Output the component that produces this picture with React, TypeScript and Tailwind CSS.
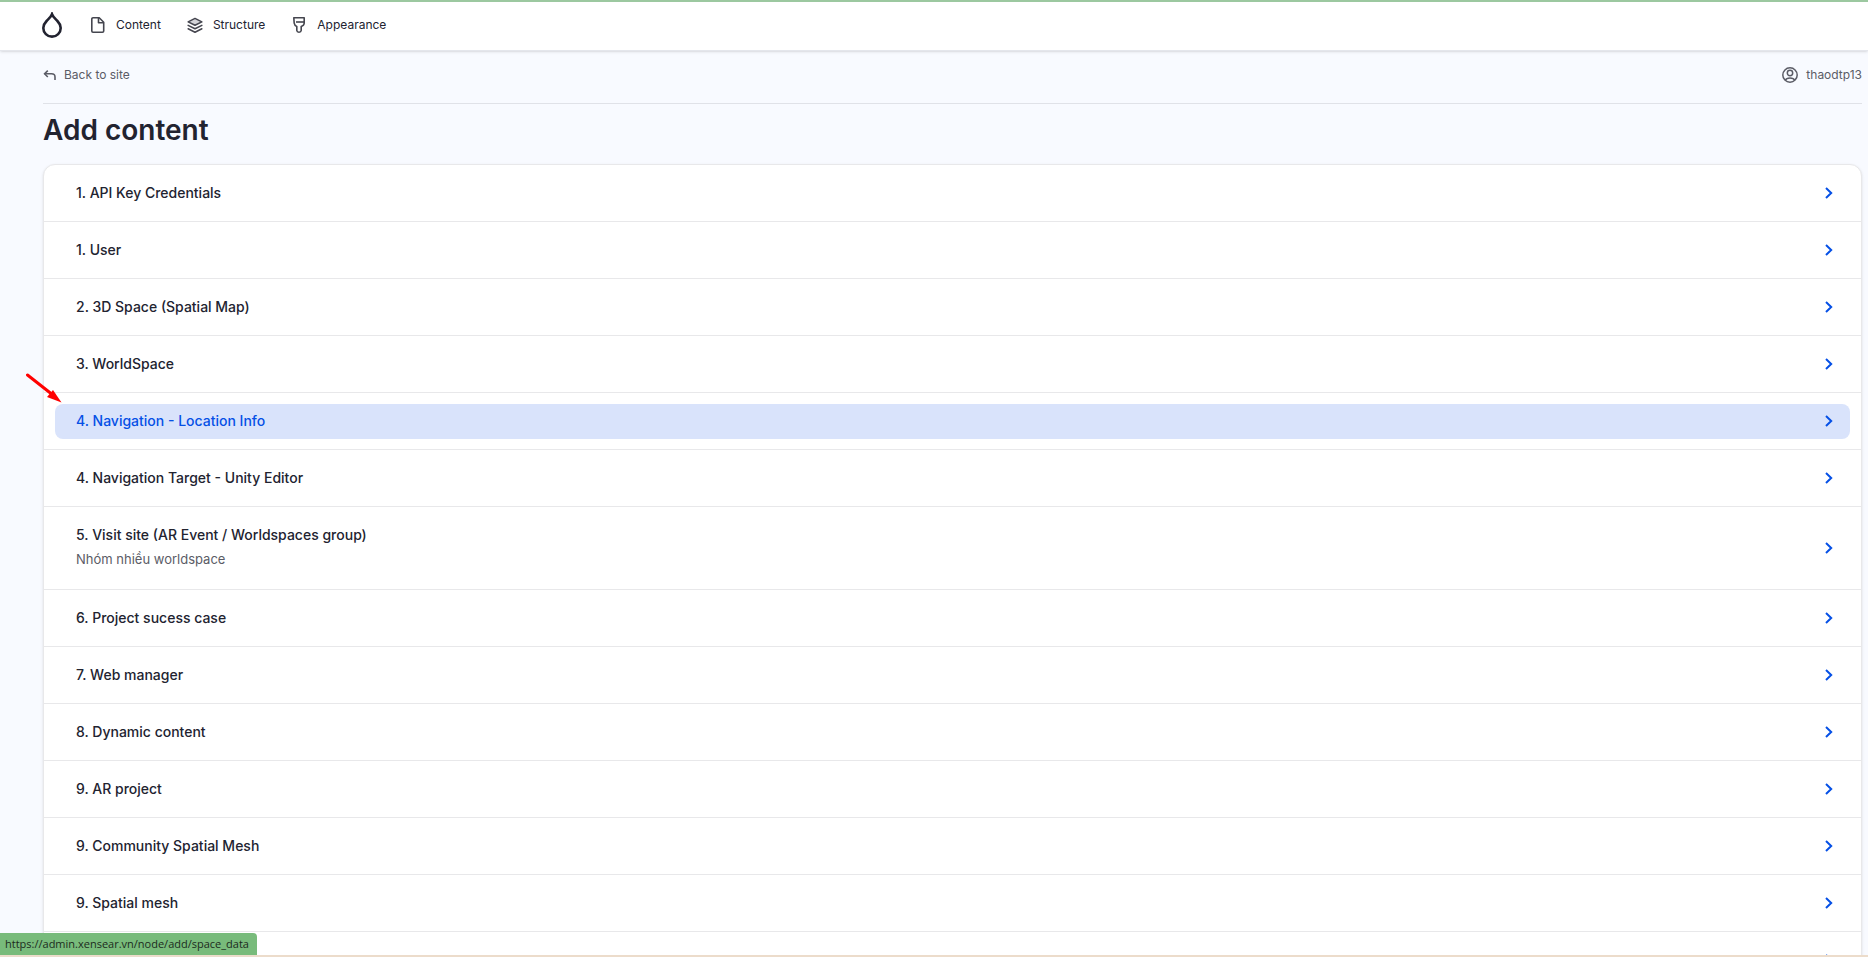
import type { ReactNode } from "react";

interface ContentType {
  label: string;
  href: string;
  description?: string;
  active?: boolean;
}

const contentTypes: ContentType[] = [
  { label: "1. API Key Credentials", href: "/node/add/api_key" },
  { label: "1. User", href: "/node/add/user" },
  { label: "2. 3D Space (Spatial Map)", href: "/node/add/space" },
  { label: "3. WorldSpace", href: "/node/add/worldspace" },
  { label: "4. Navigation - Location Info", href: "/node/add/space_data", active: true },
  { label: "4. Navigation Target - Unity Editor", href: "/node/add/navigation_target" },
  {
    label: "5. Visit site (AR Event / Worldspaces group)",
    href: "/node/add/visit_site",
    description: "Nhóm nhiều worldspace",
  },
  { label: "6. Project sucess case", href: "/node/add/project_case" },
  { label: "7. Web manager", href: "/node/add/web_manager" },
  { label: "8. Dynamic content", href: "/node/add/dynamic_content" },
  { label: "9. AR project", href: "/node/add/ar_project" },
  { label: "9. Community Spatial Mesh", href: "/node/add/community_mesh" },
  { label: "9. Spatial mesh", href: "/node/add/spatial_mesh" },
  { label: "", href: "/node/add/other" },
];

function DropIcon() {
  return (
    <svg width="20" height="26" viewBox="0 0 20 26" fill="none" stroke="currentColor" strokeWidth="2.6">
      <path d="M10 2.2C9 5 6.7 6.8 4.6 9C2.5 11.2 1.3 13.2 1.3 15.9A8.7 8.7 0 0 0 18.7 15.9C18.7 13.2 17.5 11.2 15.4 9C13.3 6.8 11 5 10 2.2Z" />
    </svg>
  );
}

function FileIcon() {
  return (
    <svg width="14" height="16" viewBox="0 0 14 16" fill="none" stroke="currentColor" strokeWidth="1.6" strokeLinejoin="round">
      <path d="M2 .8H8.2L12.7 5.2V14A1.2 1.2 0 0 1 11.5 15.2H2A1.2 1.2 0 0 1 .8 14V2A1.2 1.2 0 0 1 2 .8Z" />
      <path d="M7.5 1V5.8H12.5" />
    </svg>
  );
}

function LayersIcon() {
  return (
    <svg width="17" height="17" viewBox="0 0 17 17" fill="none" stroke="currentColor" strokeWidth="1.6" strokeLinejoin="round" strokeLinecap="round">
      <path d="M8.5 1L15.8 4.6L8.5 8.2L1.2 4.6Z" fill="#d4d4d8" />
      <path d="M1.2 8.4L8.5 12L15.8 8.4" />
      <path d="M1.2 12L8.5 15.7L15.8 12" />
    </svg>
  );
}

function BrushIcon() {
  return (
    <svg width="12" height="16" viewBox="0 0 12 16" fill="none" stroke="currentColor" strokeWidth="1.6" strokeLinejoin="round">
      <path d="M.8 .8H11.2V6.2Q11 8.6 8.2 9.5V13.5Q8 15.2 6 15.2T3.8 13.5V9.5Q1.6 8.8 1.2 6.2Z" />
      <path d="M3 5H11" />
    </svg>
  );
}

function BackIcon() {
  return (
    <svg width="13" height="11" viewBox="0 0 13 11" fill="none" stroke="currentColor" strokeWidth="1.6">
      <path d="M4.8 .6L1.6 3.8L4.8 7" />
      <path d="M1.6 3.8H8.5Q12 3.8 12 6.9V10" />
    </svg>
  );
}

function UserIcon() {
  return (
    <svg width="16" height="16" viewBox="0 0 16 16" fill="none" stroke="currentColor" strokeWidth="1.5">
      <circle cx="8" cy="8" r="7.2" />
      <circle cx="8" cy="6" r="2.7" />
      <path d="M3.3 13.2Q4.3 10.9 8 10.9T12.7 13.2" />
    </svg>
  );
}

function ChevronIcon() {
  return (
    <svg width="8" height="12" viewBox="0 0 8 12" fill="none" stroke="currentColor" strokeWidth="2" className="shrink-0 text-[#0550e6]">
      <path d="M1 1L6.2 6L1 11" />
    </svg>
  );
}

function ToolbarLink({ icon, label, href }: { icon: ReactNode; label: string; href: string }) {
  return (
    <a href={href} className="flex items-center gap-2.5 text-[#222330]">
      <span className="flex w-4 justify-center text-[#45464f]">{icon}</span>
      {label}
    </a>
  );
}

function TypeRow({ item }: { item: ContentType }) {
  return (
    <li className="relative border-b border-[#e8e8ea]">
      {item.active && <div className="absolute inset-x-[11px] top-[11px] h-[35px] rounded-lg bg-[#d9e3fb]" />}
      <a
        href={item.href}
        aria-label={item.label || "More"}
        className="relative flex items-center justify-between py-[18px] pr-7 pl-8"
      >
        <div>
          <div className={`min-h-5 text-[14px] leading-5 font-medium ${item.active ? "text-[#0550e6]" : "text-[#222330]"}`}>
            {item.label}
          </div>
          {item.description && <p className="mt-1 pb-0.5 text-[13px] leading-5 text-[#5b5c66]">{item.description}</p>}
        </div>
        <ChevronIcon />
      </a>
    </li>
  );
}

export default function App() {
  return (
    <div className="relative flex h-screen flex-col overflow-hidden bg-[#f8faff] font-[Inter,sans-serif] text-[12px] text-[#222330]">
      <header className="relative shrink-0 border-t-2 border-b border-t-[#9cc8a0] border-b-[#e4e6ec] bg-white shadow-sm">
        <nav className="flex h-12 items-center gap-[26px] pb-0.5 pl-[42px]">
          <a href="/" aria-label="Home" className="mr-0.5">
            <DropIcon />
          </a>
          <ToolbarLink icon={<FileIcon />} label="Content" href="/admin/content" />
          <ToolbarLink icon={<LayersIcon />} label="Structure" href="/admin/structure" />
          <ToolbarLink icon={<BrushIcon />} label="Appearance" href="/admin/appearance" />
        </nav>
      </header>

      <main className="min-h-0 flex-1 overflow-hidden pr-1.5 pl-[43px]">
        <div className="flex h-[53px] items-center justify-between border-b border-[#e0e2e8] pb-1 text-[#5b5c66]">
          <a href="/" className="flex items-center gap-2">
            <BackIcon />
            Back to site
          </a>
          <a href="/user" className="flex items-center gap-2">
            <UserIcon />
            thaodtp13
          </a>
        </div>
        <h1 className="pt-2 pb-4 text-[28px] leading-9 font-semibold">Add content</h1>
        <ul className="rounded-xl border border-[#e8e8ea] bg-white shadow-sm">
          {contentTypes.map((item) => (
            <TypeRow key={item.href} item={item} />
          ))}
        </ul>
      </main>

      <svg className="absolute top-[373px] left-[26px]" width="36" height="30" viewBox="0 0 36 30" fill="#ff0000">
        <path d="M1.5 2L25 20.5" stroke="#ff0000" strokeWidth="3" strokeLinecap="round" />
        <path d="M35.5 29.5L21 24L27 17Z" />
      </svg>

      <div className="absolute bottom-0.5 left-0 flex h-[22px] items-center rounded-tr bg-[#78bb7b] pr-2 pl-[5px] font-['Open_Sans',sans-serif] text-[11px] text-[#1c2b1d]">
        https://admin.xensear.vn/node/add/space_data
      </div>
      <div className="h-0.5 shrink-0 bg-[#ecdccb]" />
    </div>
  );
}
